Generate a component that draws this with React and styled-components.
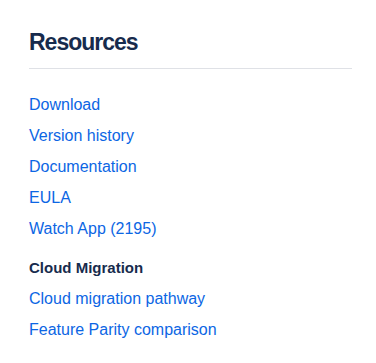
import React from "react";
import styled, { createGlobalStyle } from "styled-components";

const Global = createGlobalStyle`
  html, body { margin: 0; padding: 0; background: #fff; }
  body { font-family: "Liberation Sans", Arial, sans-serif; -webkit-font-smoothing: antialiased; }
`;

const Panel = styled.section`
  width: 323px;
  padding: 28px 0 0 29px;
`;

const Heading = styled.h2`
  margin: 0;
  font-size: 23px;
  line-height: 28px;
  font-weight: 700;
  letter-spacing: -1px;
  color: #172b4d;
`;

const Divider = styled.hr`
  margin: 12px 0 20px;
  border: 0;
  height: 1px;
  background: #dfe1e6;
`;

const List = styled.ul`
  list-style: none;
  margin: 0;
  padding: 0;
`;

const Item = styled.li`
  font-size: 16px;
  line-height: 31px;
`;

const Link = styled.a`
  color: #0c66e4;
  text-decoration: none;
`;

const SubHeading = styled.h3`
  margin: 8px 0 0;
  font-size: 15px;
  line-height: 31px;
  font-weight: 700;
  color: #172b4d;
`;

const resources = ["Download", "Version history", "Documentation", "EULA", "Watch App (2195)"];
const migration = ["Cloud migration pathway", "Feature Parity comparison"];

export default function App() {
  return (
    <>
      <Global />
      <Panel>
        <Heading>Resources</Heading>
        <Divider />
        <List>
          {resources.map((t) => (
            <Item key={t}><Link href="#">{t}</Link></Item>
          ))}
        </List>
        <SubHeading>Cloud Migration</SubHeading>
        <List>
          {migration.map((t) => (
            <Item key={t}><Link href="#">{t}</Link></Item>
          ))}
        </List>
      </Panel>
    </>
  );
}
